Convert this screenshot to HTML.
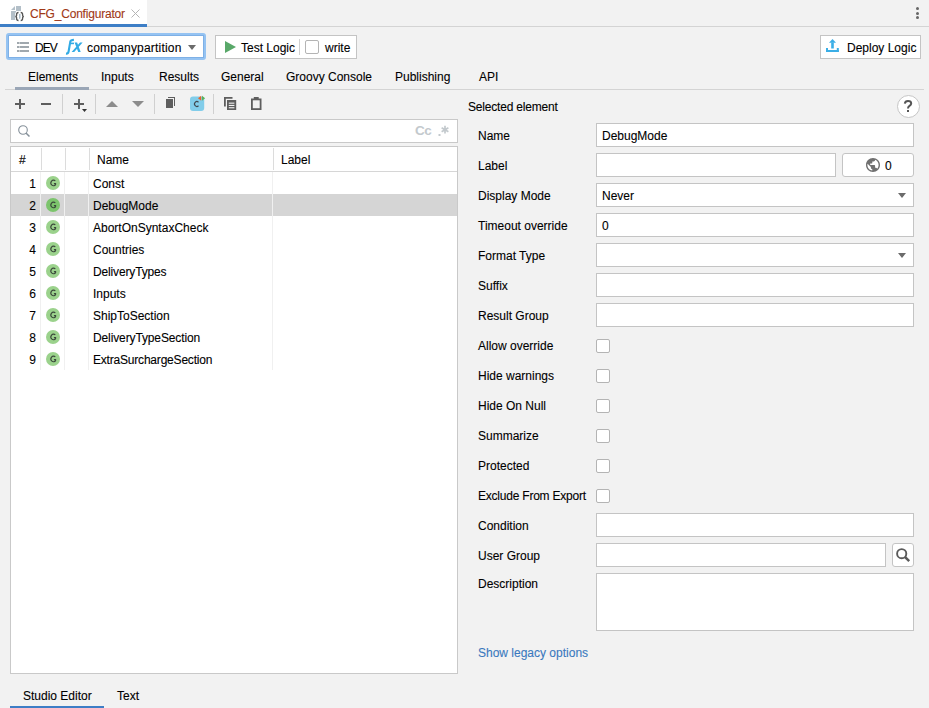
<!DOCTYPE html>
<html><head><meta charset="utf-8">
<style>
*{box-sizing:border-box;margin:0;padding:0}
html,body{width:929px;height:708px;overflow:hidden;background:#f2f2f2}
body{position:relative;font-family:"Liberation Sans",sans-serif;font-size:12px;color:#000;-webkit-text-stroke:0.1px currentColor}
.a{position:absolute}
.t{position:absolute;line-height:14px;white-space:pre}
.fld{position:absolute;background:#fff;border:1px solid #c4c4c4}
.cb{position:absolute;width:14px;height:14px;background:#fff;border:1px solid #b4b4b4;border-radius:2px}
.vs{position:absolute;width:1px}
.g{position:absolute;width:14px;height:14px;border-radius:50%;background:#95cc85}
.g span{position:absolute;left:0;top:0;width:14px;line-height:14px;text-align:center;font-size:8px;color:#4b5a4b}
svg{position:absolute;overflow:visible}
</style></head><body>

<div class="a" style="left:0;top:0;width:147px;height:24px;background:#fff"></div>
<div class="a" style="left:0;top:24px;width:147px;height:3px;background:#3d7ec6"></div>
<div class="a" style="left:147px;top:26px;width:782px;height:1px;background:#d4d4d4"></div>
<svg style="left:11px;top:5px" width="14" height="17" viewBox="0 0 14 17">
<path d="M0 5L4 1V5Z" fill="#b3bfc8"/>
<rect x="5" y="1" width="5" height="5" fill="#b3bfc8"/>
<rect x="0" y="6" width="5" height="9" fill="#b3bfc8"/>
<rect x="8" y="9" width="1.3" height="4.5" fill="#a9bccb"/>
<path d="M7.5 7.5Q5.6 7.5 5.6 9.5V10.4Q5.6 11.5 4.3 11.5Q5.6 11.5 5.6 12.6V13.5Q5.6 15.5 7.5 15.5M9.7 7.5Q11.6 7.5 11.6 9.5V10.4Q11.6 11.5 12.9 11.5Q11.6 11.5 11.6 12.6V13.5Q11.6 15.5 9.7 15.5" fill="none" stroke="#fff" stroke-width="3"/>
<rect x="8" y="9" width="1.3" height="4.5" fill="#a9bccb"/>
<path d="M7.5 7.5Q5.6 7.5 5.6 9.5V10.4Q5.6 11.5 4.3 11.5Q5.6 11.5 5.6 12.6V13.5Q5.6 15.5 7.5 15.5M9.7 7.5Q11.6 7.5 11.6 9.5V10.4Q11.6 11.5 12.9 11.5Q11.6 11.5 11.6 12.6V13.5Q11.6 15.5 9.7 15.5" fill="none" stroke="#555" stroke-width="1.3"/>
</svg>
<div class="t" style="left:30px;top:7px;color:#a03816;letter-spacing:-0.2px">CFG_Configurator</div>
<svg style="left:131px;top:9px" width="9" height="9" viewBox="0 0 9 9"><path d="M0.5 0.5L8.5 8.5M8.5 0.5L0.5 8.5" stroke="#b4b4b4" stroke-width="1"/></svg>
<div class="a" style="left:916px;top:7px;width:3px;height:3px;background:#666;border-radius:50%"></div>
<div class="a" style="left:916px;top:12px;width:3px;height:3px;background:#666;border-radius:50%"></div>
<div class="a" style="left:916px;top:16px;width:3px;height:3px;background:#666;border-radius:50%"></div>
<div class="a" style="left:6px;top:33px;width:200px;height:27px;border:2px solid #95c3f2;border-radius:3px;background:#fff"></div>
<div class="a" style="left:8px;top:35px;width:196px;height:23px;border:1px solid #7eb0e6;background:#fff"></div>
<svg style="left:17px;top:42px" width="12" height="10" viewBox="0 0 12 10">
<rect x="0" y="0" width="12" height="2" fill="#a0a8ae"/><rect x="2" y="0" width="1" height="2" fill="#c9ced1"/>
<rect x="0" y="4" width="12" height="2" fill="#a0a8ae"/><rect x="2" y="4" width="1" height="2" fill="#c9ced1"/>
<rect x="0" y="8" width="12" height="2" fill="#a0a8ae"/><rect x="2" y="8" width="1" height="2" fill="#c9ced1"/>
</svg>
<div class="t" style="left:35px;top:41px;letter-spacing:-0.9px">DEV</div>
<svg style="left:62px;top:36px" width="24" height="22" viewBox="0 0 24 22">
<path d="M4 17.6Q6.2 17.8 6.6 15.5L8.3 5.6Q8.7 3.9 11.9 3.9" fill="none" stroke="#32abe5" stroke-width="2.1"/>
<path d="M8.6 7.4H12" stroke="#32abe5" stroke-width="1.6"/>
<path d="M12.6 6.6H15.1L18.7 15.9H16.2Z M18 6.6H20.6L12.2 15.9H9.6Z" fill="#32abe5"/>
</svg>
<div class="t" style="left:87px;top:41px;letter-spacing:0.2px">companypartition</div>
<svg style="left:188px;top:45px" width="8" height="5" viewBox="0 0 8 5"><path d="M0 0H8L4 5Z" fill="#6b6b6b"/></svg>
<div class="a" style="left:215px;top:35px;width:142px;height:24px;background:#fff;border:1px solid #c4c4c4"></div>
<svg style="left:225px;top:41px" width="11" height="12" viewBox="0 0 11 12"><path d="M0 0L11 6L0 12Z" fill="#59a869"/></svg>
<div class="t" style="left:241px;top:41px">Test Logic</div>
<div class="a" style="left:299px;top:39px;width:1px;height:16px;background:#d0d0d0"></div>
<div class="cb" style="left:305px;top:40px"></div>
<div class="t" style="left:325px;top:41px">write</div>
<div class="a" style="left:820px;top:35px;width:101px;height:24px;background:#fff;border:1px solid #c4c4c4"></div>
<svg style="left:826px;top:38px" width="13" height="14" viewBox="0 0 13 14">
<path d="M6.5 0.9L3 4.7H10Z" fill="#3baee6"/><rect x="5.2" y="4.5" width="2.6" height="6" fill="#3baee6"/>
<rect x="0" y="10" width="2" height="4" fill="#3baee6"/><rect x="0" y="12" width="12.8" height="2" fill="#3baee6"/><rect x="10.8" y="10" width="2" height="4" fill="#3baee6"/>
</svg>
<div class="t" style="left:847px;top:41px">Deploy Logic</div>
<div class="a" style="left:5px;top:89px;width:919px;height:1px;background:#d4d4d4"></div>
<div class="a" style="left:15px;top:87px;width:74px;height:3px;background:#9aa6b6"></div>
<div class="t" style="left:28px;top:70px">Elements</div>
<div class="t" style="left:101px;top:70px">Inputs</div>
<div class="t" style="left:159px;top:70px">Results</div>
<div class="t" style="left:221px;top:70px">General</div>
<div class="t" style="left:286px;top:70px">Groovy Console</div>
<div class="t" style="left:395px;top:70px">Publishing</div>
<div class="t" style="left:479px;top:70px">API</div>
<div class="a" style="left:15px;top:103px;width:10px;height:2px;background:#5e5e5e"></div>
<div class="a" style="left:19px;top:99px;width:2px;height:10px;background:#5e5e5e"></div>
<div class="a" style="left:41px;top:103px;width:10px;height:2px;background:#5e5e5e"></div>
<div class="a" style="left:62px;top:94px;width:1px;height:20px;background:#d0d0d0"></div>
<div class="a" style="left:95px;top:94px;width:1px;height:20px;background:#d0d0d0"></div>
<div class="a" style="left:154px;top:94px;width:1px;height:20px;background:#d0d0d0"></div>
<div class="a" style="left:213px;top:94px;width:1px;height:20px;background:#d0d0d0"></div>
<div class="a" style="left:74px;top:103px;width:10px;height:2px;background:#5e5e5e"></div>
<div class="a" style="left:78px;top:99px;width:2px;height:10px;background:#5e5e5e"></div>
<svg style="left:82px;top:109px" width="5" height="3" viewBox="0 0 5 3"><path d="M0 0H5L2.5 3Z" fill="#333"/></svg>
<svg style="left:106px;top:101px" width="12" height="6" viewBox="0 0 12 6"><path d="M0 6H12L6 0Z" fill="#8c8c8c"/></svg>
<svg style="left:132px;top:101px" width="12" height="6" viewBox="0 0 12 6"><path d="M0 0H12L6 6Z" fill="#8c8c8c"/></svg>
<svg style="left:166px;top:97px" width="9" height="11" viewBox="0 0 9 11"><path d="M2 0H9V9H8V1H2Z" fill="#5e5e5e"/><rect x="0" y="2" width="7" height="9" fill="#5e5e5e"/></svg>
<svg style="left:190px;top:95px" width="16" height="17" viewBox="0 0 16 17">
<rect x="0" y="1.6" width="14.2" height="14.4" rx="3" fill="#82cdea"/>
<path d="M8.5 7.2A2.4 2.4 0 1 0 8.5 10.8" fill="none" stroke="#404850" stroke-width="1.15"/>
<path d="M11.2 0.8V5.8L8 3.3Z" fill="#e8642a"/><path d="M12 0.8V5.8L15.1 3.3Z" fill="#59b35a"/>
</svg>
<svg style="left:224px;top:97px" width="13" height="13" viewBox="0 0 13 13">
<path d="M0 0H8.5V1.8H1.8V9.5H0Z" fill="#5e5e5e"/><rect x="3" y="3" width="9.2" height="10" fill="#5e5e5e"/>
<rect x="4.8" y="5.6" width="5.6" height="1.1" fill="#f2f2f2"/><rect x="4.8" y="7.9" width="5.6" height="1.1" fill="#f2f2f2"/><rect x="4.8" y="10.2" width="5.6" height="1.1" fill="#f2f2f2"/>
</svg>
<svg style="left:251px;top:97px" width="11" height="13" viewBox="0 0 11 13">
<path d="M2.8 0H7.7V1.5H10.5V13H0V1.5H2.8Z" fill="#5e5e5e"/><rect x="1.8" y="3.3" width="6.9" height="7.9" fill="#f2f2f2"/>
</svg>
<div class="fld" style="left:10px;top:119px;width:448px;height:24px;border-color:#c9c9c9"></div>
<svg style="left:18px;top:125px" width="12" height="12" viewBox="0 0 12 12"><circle cx="5" cy="5" r="4.3" fill="none" stroke="#86919a" stroke-width="1.1"/><path d="M8 8L11.5 11.5" stroke="#86919a" stroke-width="1.5"/></svg>
<div class="t" style="left:415px;top:124px;color:#c3c9cd;font-size:13.5px;font-weight:bold;letter-spacing:-0.6px;-webkit-text-stroke:0">Cc</div>
<svg style="left:438px;top:125px" width="12" height="12" viewBox="0 0 12 12"><rect x="0.5" y="9" width="2" height="2" fill="#c3c9cd"/>
<path d="M7 0.8V8.6M3.6 2.75L10.4 6.65M10.4 2.75L3.6 6.65" stroke="#c3c9cd" stroke-width="1.7"/></svg>
<div class="a" style="left:10px;top:146px;width:448px;height:528px;background:#fff;border:1px solid #c9c9c9"></div>
<div class="a" style="left:11px;top:171px;width:446px;height:1px;background:#d6d6d6"></div>
<div class="vs" style="left:41px;top:148px;height:22px;background:#dcdcdc"></div>
<div class="vs" style="left:65px;top:148px;height:22px;background:#dcdcdc"></div>
<div class="vs" style="left:89px;top:148px;height:22px;background:#dcdcdc"></div>
<div class="vs" style="left:273px;top:148px;height:22px;background:#dcdcdc"></div>
<div class="t" style="left:19px;top:153px">#</div>
<div class="t" style="left:97px;top:153px">Name</div>
<div class="t" style="left:281px;top:153px">Label</div>
<div class="a" style="left:11px;top:194px;width:446px;height:22px;background:#d5d5d5"></div>
<div class="vs" style="left:40px;top:172px;height:198px;background:#f0f0f0"></div>
<div class="vs" style="left:64px;top:172px;height:198px;background:#f0f0f0"></div>
<div class="vs" style="left:88px;top:172px;height:198px;background:#f0f0f0"></div>
<div class="vs" style="left:272px;top:172px;height:198px;background:#f0f0f0"></div>
<div class="t" style="left:11px;width:25px;text-align:right;top:177px">1</div>
<svg style="left:46px;top:176px" width="14" height="14" viewBox="0 0 14 14"><circle cx="7" cy="7" r="7" fill="#9bd28c"/><path d="M9.3 4.9A2.6 2.8 0 1 0 9.6 8.6V7.6H7.9" fill="none" stroke="#3b4a3b" stroke-width="1.1"/></svg>
<div class="t" style="left:93px;top:177px;letter-spacing:0px">Const</div>
<div class="t" style="left:11px;width:25px;text-align:right;top:199px">2</div>
<svg style="left:46px;top:198px" width="14" height="14" viewBox="0 0 14 14"><circle cx="7" cy="7" r="7" fill="#7cc46c"/><path d="M9.3 4.9A2.6 2.8 0 1 0 9.6 8.6V7.6H7.9" fill="none" stroke="#3b4a3b" stroke-width="1.1"/></svg>
<div class="t" style="left:93px;top:199px;letter-spacing:0px">DebugMode</div>
<div class="t" style="left:11px;width:25px;text-align:right;top:221px">3</div>
<svg style="left:46px;top:220px" width="14" height="14" viewBox="0 0 14 14"><circle cx="7" cy="7" r="7" fill="#9bd28c"/><path d="M9.3 4.9A2.6 2.8 0 1 0 9.6 8.6V7.6H7.9" fill="none" stroke="#3b4a3b" stroke-width="1.1"/></svg>
<div class="t" style="left:93px;top:221px;letter-spacing:0px">AbortOnSyntaxCheck</div>
<div class="t" style="left:11px;width:25px;text-align:right;top:243px">4</div>
<svg style="left:46px;top:242px" width="14" height="14" viewBox="0 0 14 14"><circle cx="7" cy="7" r="7" fill="#9bd28c"/><path d="M9.3 4.9A2.6 2.8 0 1 0 9.6 8.6V7.6H7.9" fill="none" stroke="#3b4a3b" stroke-width="1.1"/></svg>
<div class="t" style="left:93px;top:243px;letter-spacing:0px">Countries</div>
<div class="t" style="left:11px;width:25px;text-align:right;top:265px">5</div>
<svg style="left:46px;top:264px" width="14" height="14" viewBox="0 0 14 14"><circle cx="7" cy="7" r="7" fill="#9bd28c"/><path d="M9.3 4.9A2.6 2.8 0 1 0 9.6 8.6V7.6H7.9" fill="none" stroke="#3b4a3b" stroke-width="1.1"/></svg>
<div class="t" style="left:93px;top:265px;letter-spacing:-0.15px">DeliveryTypes</div>
<div class="t" style="left:11px;width:25px;text-align:right;top:287px">6</div>
<svg style="left:46px;top:286px" width="14" height="14" viewBox="0 0 14 14"><circle cx="7" cy="7" r="7" fill="#9bd28c"/><path d="M9.3 4.9A2.6 2.8 0 1 0 9.6 8.6V7.6H7.9" fill="none" stroke="#3b4a3b" stroke-width="1.1"/></svg>
<div class="t" style="left:93px;top:287px;letter-spacing:0px">Inputs</div>
<div class="t" style="left:11px;width:25px;text-align:right;top:309px">7</div>
<svg style="left:46px;top:308px" width="14" height="14" viewBox="0 0 14 14"><circle cx="7" cy="7" r="7" fill="#9bd28c"/><path d="M9.3 4.9A2.6 2.8 0 1 0 9.6 8.6V7.6H7.9" fill="none" stroke="#3b4a3b" stroke-width="1.1"/></svg>
<div class="t" style="left:93px;top:309px;letter-spacing:0px">ShipToSection</div>
<div class="t" style="left:11px;width:25px;text-align:right;top:331px">8</div>
<svg style="left:46px;top:330px" width="14" height="14" viewBox="0 0 14 14"><circle cx="7" cy="7" r="7" fill="#9bd28c"/><path d="M9.3 4.9A2.6 2.8 0 1 0 9.6 8.6V7.6H7.9" fill="none" stroke="#3b4a3b" stroke-width="1.1"/></svg>
<div class="t" style="left:93px;top:331px;letter-spacing:-0.12px">DeliveryTypeSection</div>
<div class="t" style="left:11px;width:25px;text-align:right;top:353px">9</div>
<svg style="left:46px;top:352px" width="14" height="14" viewBox="0 0 14 14"><circle cx="7" cy="7" r="7" fill="#9bd28c"/><path d="M9.3 4.9A2.6 2.8 0 1 0 9.6 8.6V7.6H7.9" fill="none" stroke="#3b4a3b" stroke-width="1.1"/></svg>
<div class="t" style="left:93px;top:353px;letter-spacing:-0.2px">ExtraSurchargeSection</div>
<div class="t" style="left:468px;top:100px;letter-spacing:-0.2px">Selected element</div>
<svg style="left:897px;top:95px" width="23" height="23" viewBox="0 0 23 23">
<circle cx="11.5" cy="11.5" r="11" fill="#fff" stroke="#c6c6c6" stroke-width="1"/>
<path d="M7.8 8.6Q8.2 6 11 6Q14.2 6 14.2 8.4Q14.2 9.8 12.5 10.8Q11 11.7 11 13.6" fill="none" stroke="#555" stroke-width="2"/>
<rect x="10" y="15" width="2" height="2" fill="#555"/>
</svg>
<div class="t" style="left:478px;top:129px">Name</div>
<div class="t" style="left:478px;top:159px">Label</div>
<div class="t" style="left:478px;top:189px">Display Mode</div>
<div class="t" style="left:478px;top:219px">Timeout override</div>
<div class="t" style="left:478px;top:249px">Format Type</div>
<div class="t" style="left:478px;top:279px">Suffix</div>
<div class="t" style="left:478px;top:309px">Result Group</div>
<div class="t" style="left:478px;top:339px">Allow override</div>
<div class="t" style="left:478px;top:369px">Hide warnings</div>
<div class="t" style="left:478px;top:399px">Hide On Null</div>
<div class="t" style="left:478px;top:429px">Summarize</div>
<div class="t" style="left:478px;top:459px">Protected</div>
<div class="t" style="left:478px;top:489px;letter-spacing:-0.22px">Exclude From Export</div>
<div class="t" style="left:478px;top:519px">Condition</div>
<div class="t" style="left:478px;top:549px">User Group</div>
<div class="t" style="left:478px;top:577px">Description</div>
<div class="fld" style="left:596px;top:123px;width:318px;height:24px"></div>
<div class="t" style="left:602px;top:129px">DebugMode</div>
<div class="fld" style="left:596px;top:153px;width:240px;height:24px"></div>
<div class="fld" style="left:842px;top:153px;width:72px;height:24px;border-radius:3px"></div>
<svg style="left:866px;top:158px" width="14" height="14" viewBox="2 2 20 20"><path fill="#707070" d="M12 2C6.48 2 2 6.48 2 12s4.48 10 10 10 10-4.48 10-10S17.52 2 12 2zm-1 17.93c-3.950-.49-7-3.85-7-7.93 0-.62.08-1.21.21-1.79L9 15v1c0 1.1.9 2 2 2v1.93zm6.9-2.54c-.26-.81-1-1.390-1.9-1.39h-1v-3c0-.55-.45-1-1-1H8v-2h2c.55 0 1-.45 1-1V7h2c1.1 0 2-.9 2-2v-.41c2.93 1.19 5 4.06 5 7.41 0 2.08-.8 3.970-2.1 5.39z"/></svg>
<div class="t" style="left:885px;top:159px">0</div>
<div class="fld" style="left:596px;top:183px;width:318px;height:24px"></div>
<div class="t" style="left:602px;top:189px">Never</div>
<svg style="left:898px;top:193px" width="8" height="5" viewBox="0 0 8 5"><path d="M0 0H8L4 5Z" fill="#6b6b6b"/></svg>
<div class="fld" style="left:596px;top:213px;width:318px;height:24px"></div>
<div class="t" style="left:602px;top:219px">0</div>
<div class="fld" style="left:596px;top:243px;width:318px;height:24px"></div>
<svg style="left:898px;top:253px" width="8" height="5" viewBox="0 0 8 5"><path d="M0 0H8L4 5Z" fill="#6b6b6b"/></svg>
<div class="fld" style="left:596px;top:273px;width:318px;height:24px"></div>
<div class="fld" style="left:596px;top:303px;width:318px;height:24px"></div>
<div class="cb" style="left:596px;top:339px"></div>
<div class="cb" style="left:596px;top:369px"></div>
<div class="cb" style="left:596px;top:399px"></div>
<div class="cb" style="left:596px;top:429px"></div>
<div class="cb" style="left:596px;top:459px"></div>
<div class="cb" style="left:596px;top:489px"></div>
<div class="fld" style="left:596px;top:513px;width:318px;height:24px"></div>
<div class="fld" style="left:596px;top:543px;width:290px;height:24px"></div>
<div class="fld" style="left:892px;top:543px;width:22px;height:24px;border-radius:3px"></div>
<svg style="left:892px;top:543px" width="22" height="24" viewBox="0 0 22 24"><circle cx="9.7" cy="10.7" r="4.6" fill="none" stroke="#5a5a5a" stroke-width="1.9"/><path d="M12.9 13.9L17.2 18.2" stroke="#5a5a5a" stroke-width="2.5"/></svg>
<div class="fld" style="left:596px;top:573px;width:318px;height:58px"></div>
<div class="t" style="left:478px;top:646px;color:#3a79be">Show legacy options</div>
<div class="t" style="left:23px;top:689px">Studio Editor</div>
<div class="t" style="left:117px;top:689px">Text</div>
<div class="a" style="left:10px;top:706px;width:94px;height:2px;background:#3d7ec6"></div>
</body></html>
